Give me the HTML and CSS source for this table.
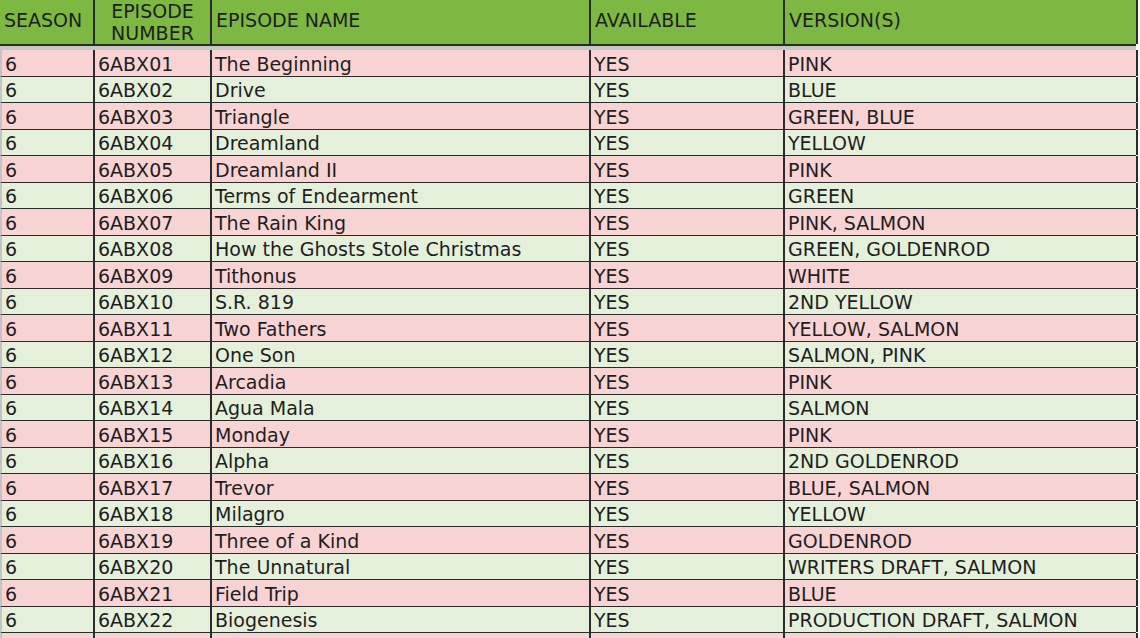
FILE: index.html
```html
<!DOCTYPE html>
<html lang="en">
<head>
<meta charset="utf-8">
<title>Season 6 Episodes</title>
<link rel="stylesheet" href="styles.css">
</head>
<body>
<div class="sheet">
  <div class="head-wrap">
    <div class="row head">
      <div class="cell">SEASON</div>
      <div class="cell center two">EPISODE<br>NUMBER</div>
      <div class="cell">EPISODE NAME</div>
      <div class="cell">AVAILABLE</div>
      <div class="cell">VERSION(S)</div>
    </div>
  </div>
  <div class="row pink"><div class="cell">6</div><div class="cell">6ABX01</div><div class="cell">The Beginning</div><div class="cell">YES</div><div class="cell">PINK</div></div>
  <div class="row green"><div class="cell">6</div><div class="cell">6ABX02</div><div class="cell">Drive</div><div class="cell">YES</div><div class="cell">BLUE</div></div>
  <div class="row pink"><div class="cell">6</div><div class="cell">6ABX03</div><div class="cell">Triangle</div><div class="cell">YES</div><div class="cell">GREEN, BLUE</div></div>
  <div class="row green"><div class="cell">6</div><div class="cell">6ABX04</div><div class="cell">Dreamland</div><div class="cell">YES</div><div class="cell">YELLOW</div></div>
  <div class="row pink"><div class="cell">6</div><div class="cell">6ABX05</div><div class="cell">Dreamland II</div><div class="cell">YES</div><div class="cell">PINK</div></div>
  <div class="row green"><div class="cell">6</div><div class="cell">6ABX06</div><div class="cell">Terms of Endearment</div><div class="cell">YES</div><div class="cell">GREEN</div></div>
  <div class="row pink"><div class="cell">6</div><div class="cell">6ABX07</div><div class="cell">The Rain King</div><div class="cell">YES</div><div class="cell">PINK, SALMON</div></div>
  <div class="row green"><div class="cell">6</div><div class="cell">6ABX08</div><div class="cell">How the Ghosts Stole Christmas</div><div class="cell">YES</div><div class="cell">GREEN, GOLDENROD</div></div>
  <div class="row pink"><div class="cell">6</div><div class="cell">6ABX09</div><div class="cell">Tithonus</div><div class="cell">YES</div><div class="cell">WHITE</div></div>
  <div class="row green"><div class="cell">6</div><div class="cell">6ABX10</div><div class="cell">S.R. 819</div><div class="cell">YES</div><div class="cell">2ND YELLOW</div></div>
  <div class="row pink"><div class="cell">6</div><div class="cell">6ABX11</div><div class="cell">Two Fathers</div><div class="cell">YES</div><div class="cell">YELLOW, SALMON</div></div>
  <div class="row green"><div class="cell">6</div><div class="cell">6ABX12</div><div class="cell">One Son</div><div class="cell">YES</div><div class="cell">SALMON, PINK</div></div>
  <div class="row pink"><div class="cell">6</div><div class="cell">6ABX13</div><div class="cell">Arcadia</div><div class="cell">YES</div><div class="cell">PINK</div></div>
  <div class="row green"><div class="cell">6</div><div class="cell">6ABX14</div><div class="cell">Agua Mala</div><div class="cell">YES</div><div class="cell">SALMON</div></div>
  <div class="row pink"><div class="cell">6</div><div class="cell">6ABX15</div><div class="cell">Monday</div><div class="cell">YES</div><div class="cell">PINK</div></div>
  <div class="row green"><div class="cell">6</div><div class="cell">6ABX16</div><div class="cell">Alpha</div><div class="cell">YES</div><div class="cell">2ND GOLDENROD</div></div>
  <div class="row pink"><div class="cell">6</div><div class="cell">6ABX17</div><div class="cell">Trevor</div><div class="cell">YES</div><div class="cell">BLUE, SALMON</div></div>
  <div class="row green"><div class="cell">6</div><div class="cell">6ABX18</div><div class="cell">Milagro</div><div class="cell">YES</div><div class="cell">YELLOW</div></div>
  <div class="row pink"><div class="cell">6</div><div class="cell">6ABX19</div><div class="cell">Three of a Kind</div><div class="cell">YES</div><div class="cell">GOLDENROD</div></div>
  <div class="row green"><div class="cell">6</div><div class="cell">6ABX20</div><div class="cell">The Unnatural</div><div class="cell">YES</div><div class="cell">WRITERS DRAFT, SALMON</div></div>
  <div class="row pink"><div class="cell">6</div><div class="cell">6ABX21</div><div class="cell">Field Trip</div><div class="cell">YES</div><div class="cell">BLUE</div></div>
  <div class="row green"><div class="cell">6</div><div class="cell">6ABX22</div><div class="cell">Biogenesis</div><div class="cell">YES</div><div class="cell">PRODUCTION DRAFT, SALMON</div></div>
  <div class="row pink"><div class="cell"></div><div class="cell"></div><div class="cell"></div><div class="cell"></div><div class="cell"></div></div>
</div>
</body>
</html>
```
FILE: styles.css
```css
html, body {
  margin: 0;
  padding: 0;
  background: #ffffff;
  overflow: hidden;
}
.sheet {
  width: 1136px;
  font-family: "DejaVu Sans", "Liberation Sans", sans-serif;
  font-size: 19px;
  color: #1e1e1e;
}
.row {
  display: grid;
  grid-template-columns: 93px 117px 379px 194px 353px;
  height: 26.5px;
  box-sizing: border-box;
  border-bottom: 1px solid #2b2b2b;
  border-left: 2px solid #c4c4c4;
}
.row .cell {
  border-right: 2px solid #2b2b2b;
  padding-left: 3px;
  padding-top: 3px;
  display: flex;
  align-items: center;
  white-space: nowrap;
  overflow: hidden;
  line-height: 1;
}
.head-wrap {
  border-bottom: 4px solid #c6c6c6;
}
.row.head {
  height: 46px;
  background: #7db843;
  border-bottom: 2px solid #2b2b2b;
  border-left: 0;
  grid-template-columns: 95px 117px 379px 194px 353px;
}
.row.head .cell {
  padding-left: 4px;
  padding-top: 0;
  padding-bottom: 4px;
}
.row.head .cell.center {
  justify-content: center;
  text-align: center;
  padding-left: 0;
  padding-bottom: 0;
}
.row.head .two {
  line-height: 22px;
}
.pink { background: #f8d3d3; }
.green { background: #e4f0da; }
```
